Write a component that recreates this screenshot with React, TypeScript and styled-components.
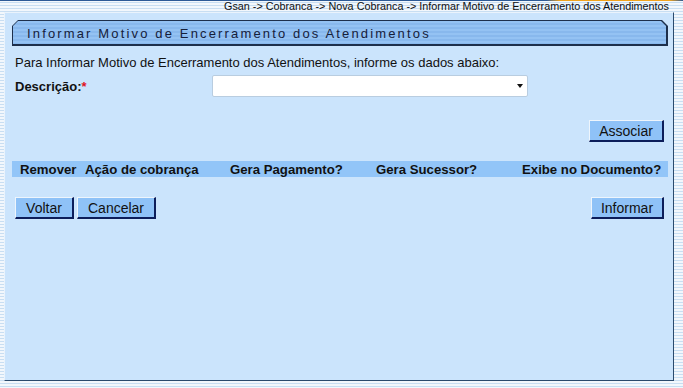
import React from 'react';
import styled, { createGlobalStyle } from 'styled-components';

const GlobalStyle = createGlobalStyle`
	html, body {
		margin: 0;
		padding: 0;
	}
	body {
		width: 683px;
		height: 388px;
		overflow: hidden;
		font-family: "Liberation Sans", Arial, sans-serif;
		background: repeating-linear-gradient(to bottom, #f2f7fc 0px, #f2f7fc 2px, #c8def2 2px, #c8def2 3px);
	}
`;

const TopLine = styled('div')`
	height: 1px;
	background: linear-gradient(to right, #2d5a96 0%, #2d5a96 80%, #f2a31c 82%, #f2a31c 98%, #2d5a96 100%);
`;

const Breadcrumb = styled('div')`
	height: 11px;
	line-height: 11px;
	font-size: 10.8px;
	color: #101010;
	text-align: right;
	padding-right: 14px;
	white-space: nowrap;
`;

const Panel = styled('div')`
	margin-left: 4px;
	width: 670px;
	height: 369px;
	background: #cbe4fc;
	border-top: 1px solid #eaf3fc;
	border-left: 1px solid #eaf3fc;
	border-right: 1px solid #2b4a6c;
	border-bottom: 1px solid #2b4a6c;
	padding: 7px 5px 0 7px;
	box-sizing: border-box;
	display: flex;
	flex-direction: column;
`;

const TitleFrame = styled('div')`
	height: 26px;
	background: #1d2f4b;
	padding: 1px 2px 2px 1px;
	box-sizing: border-box;
	clip-path: polygon(6px 0, calc(100% - 6px) 0, 100% 6px, 100% 100%, 0 100%, 0 6px);
`;

const TitleBar = styled('div')`
	height: 100%;
	background: repeating-linear-gradient(to bottom, #94c2f3 0px, #94c2f3 2px, #88b8ed 2px, #88b8ed 4px);
	clip-path: polygon(5px 0, calc(100% - 5px) 0, 100% 5px, 100% 100%, 0 100%, 0 5px);
	display: flex;
	align-items: center;
	padding: 1px 0 0 14px;
	box-sizing: border-box;
	font-size: 13px;
	letter-spacing: 2.15px;
	color: #16203a;
`;

const Intro = styled('div')`
	margin-top: 9px;
	padding-left: 3px;
	font-size: 13px;
	line-height: 15px;
	color: #111;
`;

const FormRow = styled('div')`
	margin-top: 5px;
	padding-left: 3px;
	display: flex;
	align-items: center;
	height: 22px;
`;

const Label = styled('label')`
	width: 197px;
	font-size: 13px;
	font-weight: bold;
	color: #111;
`;

const Required = styled('span')`
	color: #e0141e;
`;

const SelectBox = styled('div')`
	width: 316px;
	height: 22px;
	background: #fff;
	border: 1px solid #b9cde0;
	border-radius: 2px;
	box-sizing: border-box;
	display: flex;
	align-items: center;
	justify-content: flex-end;
	padding-right: 4px;
`;

const Caret = styled('span')`
	width: 0;
	height: 0;
	border-left: 3.5px solid transparent;
	border-right: 3.5px solid transparent;
	border-top: 4px solid #111;
`;

const ButtonRow = styled('div')<{ $top: number }>`
	margin-top: ${p => p.$top}px;
	padding: 0 4px 0 3px;
	display: flex;
	gap: 3px;
`;

const Spacer = styled('div')`
	flex: 1;
`;

const Button = styled('button')<{ $w: number }>`
	width: ${p => p.$w}px;
	height: 22px;
	padding: 0;
	background: #8fc2f7;
	border-top: 1px solid #eef5fc;
	border-left: 1px solid #eef5fc;
	border-right: 2px solid #0c1d5a;
	border-bottom: 2px solid #0c1d5a;
	font-family: "Liberation Sans", Arial, sans-serif;
	font-size: 14px;
	color: #111;
	line-height: 18px;
`;

const HeaderRow = styled('div')`
	margin-top: 19px;
	height: 16px;
	background: #92c5f8;
	display: grid;
	grid-template-columns: 65px 145px 146px 146px 1fr;
	align-items: center;
	padding-left: 8px;
	font-size: 13.2px;
	font-weight: bold;
	color: #111;
	white-space: nowrap;
`;

export default function App() {
	return (
		<>
			<GlobalStyle />
			<TopLine />
			<Breadcrumb>Gsan -&gt; Cobranca -&gt; Nova Cobranca -&gt; Informar Motivo de Encerramento dos Atendimentos</Breadcrumb>
			<Panel>
				<TitleFrame>
					<TitleBar>Informar Motivo de Encerramento dos Atendimentos</TitleBar>
				</TitleFrame>
				<Intro>Para Informar Motivo de Encerramento dos Atendimentos, informe os dados abaixo:</Intro>
				<FormRow>
					<Label>Descrição:<Required>*</Required></Label>
					<SelectBox><Caret /></SelectBox>
				</FormRow>
				<ButtonRow $top={23}>
					<Spacer />
					<Button $w={75}>Associar</Button>
				</ButtonRow>
				<HeaderRow>
					<span>Remover</span>
					<span>Ação de cobrança</span>
					<span>Gera Pagamento?</span>
					<span>Gera Sucessor?</span>
					<span>Exibe no Documento?</span>
				</HeaderRow>
				<ButtonRow $top={20}>
					<Button $w={59}>Voltar</Button>
					<Button $w={79}>Cancelar</Button>
					<Spacer />
					<Button $w={73}>Informar</Button>
				</ButtonRow>
			</Panel>
		</>
	);
}
